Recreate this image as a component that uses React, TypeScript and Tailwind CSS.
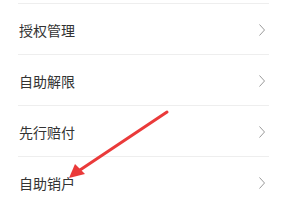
const items = ["授权管理", "自助解限", "先行赔付", "自助销户"];

function Chevron() {
  return (
    <svg width="8" height="14" viewBox="0 0 8 14" className="mr-[3px]">
      <path d="M1.5 1.5 L6.5 7 L1.5 12.5" fill="none" stroke="#9a9a9a" strokeWidth="1" />
    </svg>
  );
}

export default function App() {
  return (
    <div className="relative h-[204px] w-[282px] overflow-hidden bg-white font-['Noto_Sans_CJK_SC',sans-serif]">
      <div className="h-[3px]" />
      <ul className="ml-[18px] mr-[13px]">
        {items.map((label) => (
          <li
            key={label}
            className="flex h-[51px] items-center justify-between border-t border-[#eeeeee] pt-[2px]"
          >
            <span className="pl-px text-[14px] leading-5 text-[#333333]">{label}</span>
            <Chevron />
          </li>
        ))}
      </ul>
      <svg className="absolute left-0 top-0" width="282" height="204" viewBox="0 0 282 204">
        <line x1="167" y1="112" x2="80" y2="170" stroke="#ea3a3a" strokeWidth="3" strokeLinecap="round" />
        <polygon points="69,178 75,164 85,174" fill="#ea3a3a" />
      </svg>
    </div>
  );
}
